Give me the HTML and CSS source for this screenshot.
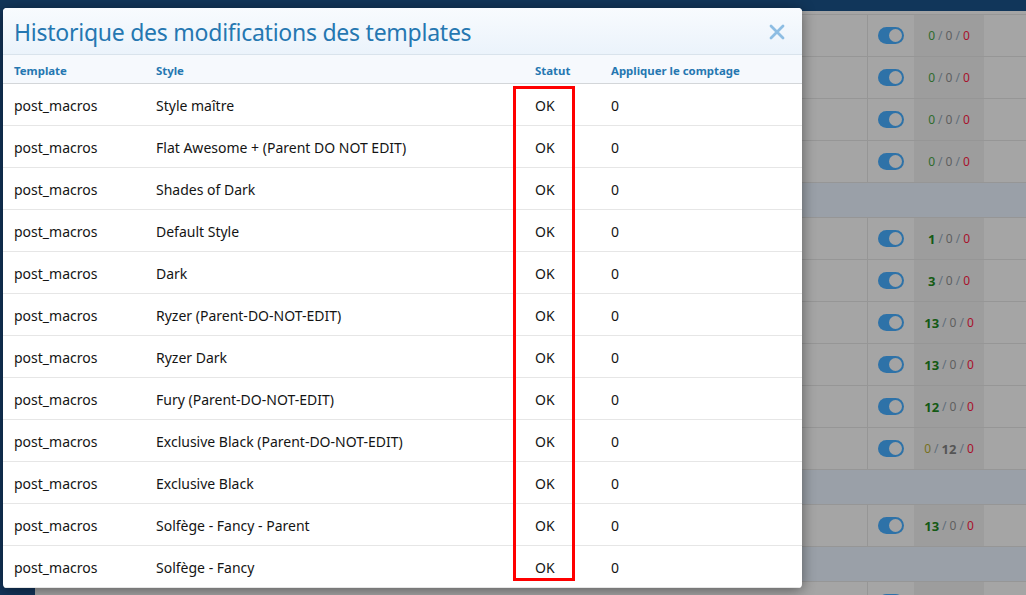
FILE: index.html
```html
<!DOCTYPE html>
<html lang="fr">
<head>
    <meta charset="UTF-8">
    <meta name="viewport" content="width=device-width, initial-scale=1.0">
    <title>Historique des modifications des templates</title>
    <link rel="stylesheet" href="styles.css">
</head>
<body>
    <div class="topbar"></div>
    <div class="page">
        <div class="sidebar"></div>
        <div class="main">
            <div class="strip"></div>
            <div class="row"><div class="cell"></div><div class="cell toggle-cell"><span class="toggle"></span></div><div class="cell counts"><span class="g">0</span><i>/</i><span class="n">0</span><i>/</i><span class="r">0</span></div><div class="cell"></div></div>
            <div class="row"><div class="cell"></div><div class="cell toggle-cell"><span class="toggle"></span></div><div class="cell counts"><span class="g">0</span><i>/</i><span class="n">0</span><i>/</i><span class="r">0</span></div><div class="cell"></div></div>
            <div class="row"><div class="cell"></div><div class="cell toggle-cell"><span class="toggle"></span></div><div class="cell counts"><span class="g">0</span><i>/</i><span class="n">0</span><i>/</i><span class="r">0</span></div><div class="cell"></div></div>
            <div class="row"><div class="cell"></div><div class="cell toggle-cell"><span class="toggle"></span></div><div class="cell counts"><span class="g">0</span><i>/</i><span class="n">0</span><i>/</i><span class="r">0</span></div><div class="cell"></div></div>
            <div class="band"></div>
            <div class="row"><div class="cell"></div><div class="cell toggle-cell"><span class="toggle"></span></div><div class="cell counts"><b class="g">1</b><i>/</i><span class="n">0</span><i>/</i><span class="r">0</span></div><div class="cell"></div></div>
            <div class="row"><div class="cell"></div><div class="cell toggle-cell"><span class="toggle"></span></div><div class="cell counts"><b class="g">3</b><i>/</i><span class="n">0</span><i>/</i><span class="r">0</span></div><div class="cell"></div></div>
            <div class="row"><div class="cell"></div><div class="cell toggle-cell"><span class="toggle"></span></div><div class="cell counts"><b class="g">13</b><i>/</i><span class="n">0</span><i>/</i><span class="r">0</span></div><div class="cell"></div></div>
            <div class="row"><div class="cell"></div><div class="cell toggle-cell"><span class="toggle"></span></div><div class="cell counts"><b class="g">13</b><i>/</i><span class="n">0</span><i>/</i><span class="r">0</span></div><div class="cell"></div></div>
            <div class="row"><div class="cell"></div><div class="cell toggle-cell"><span class="toggle"></span></div><div class="cell counts"><b class="g">12</b><i>/</i><span class="n">0</span><i>/</i><span class="r">0</span></div><div class="cell"></div></div>
            <div class="row"><div class="cell"></div><div class="cell toggle-cell"><span class="toggle"></span></div><div class="cell counts"><span class="y">0</span><i>/</i><b class="n">12</b><i>/</i><span class="r">0</span></div><div class="cell"></div></div>
            <div class="band"></div>
            <div class="row"><div class="cell"></div><div class="cell toggle-cell"><span class="toggle"></span></div><div class="cell counts"><b class="g">13</b><i>/</i><span class="n">0</span><i>/</i><span class="r">0</span></div><div class="cell"></div></div>
            <div class="band"></div>
            <div class="row"><div class="cell"></div><div class="cell toggle-cell"><span class="toggle"></span></div><div class="cell counts"></div><div class="cell"></div></div>
        </div>
    </div>

    <div class="modal">
        <div class="modal-head">
            <h1 class="modal-title">Historique des modifications des templates</h1>
            <span class="modal-close">
                <svg width="16" height="16" viewBox="0 0 16 16"><path d="M2 2 L14 14 M14 2 L2 14" stroke="#8dbde3" stroke-width="2.8" stroke-linecap="round"/></svg>
            </span>
        </div>
        <table class="history">
            <thead>
                <tr><th class="c-template">Template</th><th class="c-style">Style</th><th class="c-status">Statut</th><th>Appliquer le comptage</th></tr>
            </thead>
            <tbody>
                <tr><td>post_macros</td><td>Style maître</td><td>OK</td><td>0</td></tr>
                <tr><td>post_macros</td><td>Flat Awesome + (Parent DO NOT EDIT)</td><td>OK</td><td>0</td></tr>
                <tr><td>post_macros</td><td>Shades of Dark</td><td>OK</td><td>0</td></tr>
                <tr><td>post_macros</td><td>Default Style</td><td>OK</td><td>0</td></tr>
                <tr><td>post_macros</td><td>Dark</td><td>OK</td><td>0</td></tr>
                <tr><td>post_macros</td><td>Ryzer (Parent-DO-NOT-EDIT)</td><td>OK</td><td>0</td></tr>
                <tr><td>post_macros</td><td>Ryzer Dark</td><td>OK</td><td>0</td></tr>
                <tr><td>post_macros</td><td>Fury (Parent-DO-NOT-EDIT)</td><td>OK</td><td>0</td></tr>
                <tr><td>post_macros</td><td>Exclusive Black (Parent-DO-NOT-EDIT)</td><td>OK</td><td>0</td></tr>
                <tr><td>post_macros</td><td>Exclusive Black</td><td>OK</td><td>0</td></tr>
                <tr><td>post_macros</td><td>Solfège - Fancy - Parent</td><td>OK</td><td>0</td></tr>
                <tr><td>post_macros</td><td>Solfège - Fancy</td><td>OK</td><td>0</td></tr>
            </tbody>
        </table>
        <div class="highlight"></div>
    </div>
</body>
</html>
```

FILE: styles.css
```css
* {
	box-sizing: border-box;
}

body {
	margin: 0;
	height: 595px;
	overflow: hidden;
	background: #a5a5a5;
	font-family: "Segoe UI", "Noto Sans", "Open Sans", sans-serif;
}

.topbar {
	height: 11px;
	background: #11365a;
}

.page {
	display: flex;
	height: 584px;
}

.sidebar {
	width: 35px;
	background: #13345a;
}

.main {
	flex: 1;
	display: flex;
	flex-direction: column;
}

.strip {
	height: 4px;
	border-bottom: 1px solid #969696;
	flex-shrink: 0;
}

.row {
	display: grid;
	grid-template-columns: 832px 47px 70px 1fr;
	height: 42px;
	flex-shrink: 0;
	border-bottom: 1px solid #969696;
}

.row .cell:nth-child(2) {
	border-left: 1px solid #969696;
}

.toggle-cell {
	display: flex;
	align-items: center;
	justify-content: center;
}

.toggle {
	position: relative;
	width: 26px;
	height: 17px;
	border-radius: 9px;
	background: #2e72a8;
}

.toggle::after {
	content: '';
	position: absolute;
	right: 2px;
	top: 2px;
	width: 13px;
	height: 13px;
	border-radius: 50%;
	background: #a4a4a4;
}

.counts {
	background: #9d9d9d;
	display: flex;
	align-items: center;
	justify-content: center;
	font-size: 12px;
	gap: 3px;
}

.counts i {
	font-style: normal;
	color: #5f6e7c;
}

.counts .g {
	color: #2d6b2d;
}

.counts b.g {
	color: #145a14;
	font-size: 13px;
}

.counts .n {
	color: #5f5f5f;
}

.counts b.n {
	font-size: 13px;
	color: #555;
}

.counts .r {
	color: #a8102c;
}

.counts .y {
	color: #77701c;
}

.band {
	height: 35px;
	flex-shrink: 0;
	background: #9aa0a8;
	border-bottom: 1px solid #969696;
}

/* modal */

.modal {
	position: absolute;
	left: 3px;
	top: 8px;
	width: 799px;
	height: 580px;
	background: #fff;
	border-radius: 4px;
	overflow: hidden;
	box-shadow: 0 2px 14px rgba(0, 0, 0, 0.45);
}

.modal-head {
	height: 47px;
	display: flex;
	align-items: center;
	justify-content: space-between;
	padding: 2px 17px 0 11px;
	background: linear-gradient(#f8fbfe, #ebf3fb);
	border-bottom: 1px solid #d9e3ec;
}

.modal-title {
	margin: 0;
	font-size: 23px;
	letter-spacing: -0.25px;
	font-weight: normal;
	color: #2577b1;
}

.modal-close {
	display: flex;
}

.history {
	width: 100%;
	border-collapse: collapse;
	font-size: 14px;
	color: #141414;
}

.history th {
	height: 28px;
	padding: 3px 11px 0;
	text-align: left;
	font-size: 11.4px;
	font-weight: bold;
	color: #2577b1;
	background: #f6f9fd;
	border-bottom: 1px solid #d3d6d9;
}

.history .c-template {
	width: 142px;
}

.history .c-style {
	width: 379px;
}

.history .c-status {
	width: 76px;
}

.history td {
	height: 42px;
	padding: 2px 11px 0;
	border-bottom: 1px solid #e6e6e6;
}

.highlight {
	position: absolute;
	left: 510px;
	top: 78px;
	width: 62px;
	height: 495px;
	border: 3px solid #ff0000;
}
```
